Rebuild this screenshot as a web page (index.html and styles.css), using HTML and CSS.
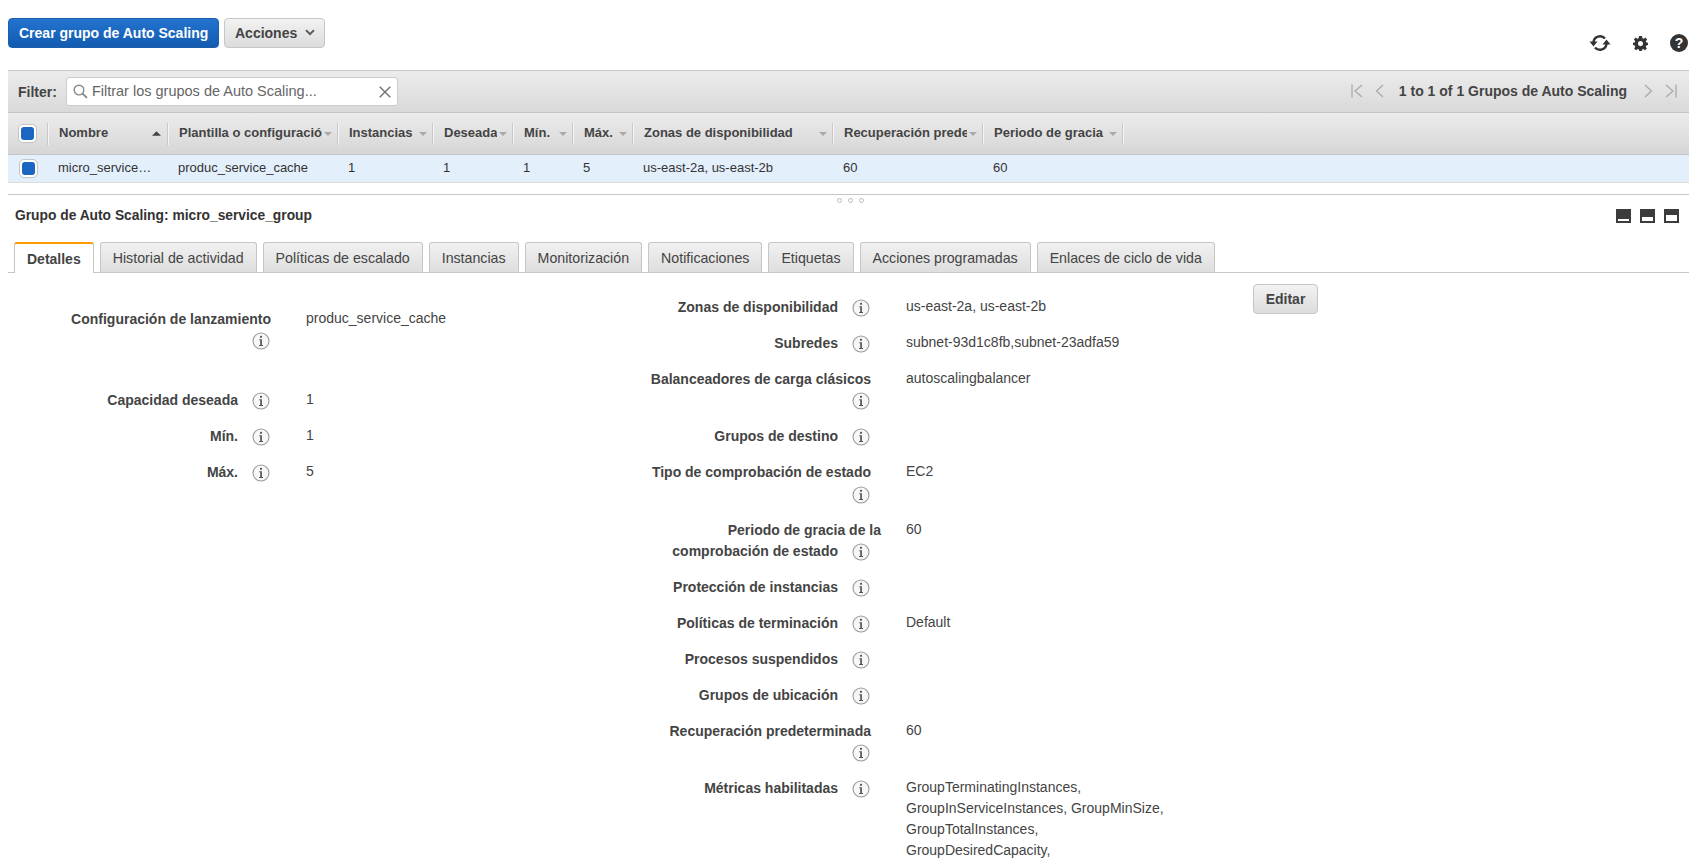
FILE: index.html
```html
<!DOCTYPE html>
<html lang="es">
<head>
<meta charset="utf-8">
<title>Grupos de Auto Scaling</title>
<link rel="stylesheet" href="styles.css">
</head>
<body>
<svg class="defs" width="0" height="0" aria-hidden="true">
  <symbol id="info" viewBox="0 0 18 18">
    <circle cx="9" cy="9" r="8" fill="#f7f7f7" stroke="#9a9a9a" stroke-width="1.1"/>
    <rect x="8" y="3.8" width="2" height="2" rx="0.6" fill="#555"/>
    <path d="M7.3 7.2H9.9V12.9H11V14H7.1V12.9H8.2V8.2H7.3Z" fill="#555"/>
  </symbol>
  <symbol id="caret" viewBox="0 0 8 4"><path d="M0 0H8L4 4Z" fill="#aaa"/></symbol>
</svg>

<header class="toolbar">
  <div class="actions">
    <button class="btn btn-primary">Crear grupo de Auto Scaling</button>
    <button class="btn btn-default btn-menu">Acciones
      <svg class="chev" viewBox="0 0 10 7" width="10" height="7"><path d="M1 1.2L5 5.2L9 1.2" fill="none" stroke="#555" stroke-width="1.8"/></svg>
    </button>
  </div>
  <div class="tools">
    <svg width="22" height="20" viewBox="0 0 22 20"><path d="M4.5 9.5A6.5 6.5 0 0 1 16 5.6" fill="none" stroke="#333" stroke-width="2.4"/><path d="M17.5 10.5A6.5 6.5 0 0 1 6 14.4" fill="none" stroke="#333" stroke-width="2.4"/><path d="M0.5 8.5H8.5L4.5 13.5Z" fill="#333"/><path d="M13.5 11.5H21.5L17.5 6.5Z" fill="#333"/></svg>
    <svg width="15" height="15" viewBox="0 0 16 16"><path fill="#333" fill-rule="evenodd" d="M6.4 0H9.6L10 2.3L11.4 2.9L13.3 1.6L15 3.8L13.7 5.6L14.2 6.9L16 7.3V9.7L14.2 10.1L13.6 11.5L14.8 13.3L12.8 15.1L11 13.8L9.7 14.4L9.3 16H6.7L6.3 14.4L5 13.8L3.2 15.1L1.2 13.3L2.4 11.5L1.8 10.1L0 9.7V7.3L1.8 6.9L2.3 5.6L1 3.8L2.7 1.6L4.6 2.9L6 2.3ZM8 5.4A2.7 2.7 0 1 0 8 10.8A2.7 2.7 0 1 0 8 5.4Z"/></svg>
    <span class="help">?</span>
  </div>
</header>

<section class="grid-panel">
  <div class="filter-bar">
    <label class="filter-label">Filter:</label>
    <div class="search">
      <svg width="15" height="15" viewBox="0 0 14 14"><circle cx="5.6" cy="5.6" r="4.5" fill="none" stroke="#888" stroke-width="1.3"/><path d="M9 9L13 13" stroke="#888" stroke-width="1.8"/></svg>
      <span class="search-text">Filtrar los grupos de Auto Scaling...</span>
      <svg class="clear" width="12" height="12" viewBox="0 0 12 12"><path d="M0.7 0.7L11.3 11.3M11.3 0.7L0.7 11.3" stroke="#777" stroke-width="1.5"/></svg>
    </div>
    <div class="pager">
      <svg width="12" height="14" viewBox="0 0 12 14"><path d="M1 0.5V13.5M11 1L4 7L11 13" fill="none" stroke="#aaa" stroke-width="1.3"/></svg>
      <svg width="9" height="14" viewBox="0 0 9 14"><path d="M8 1L1.5 7L8 13" fill="none" stroke="#aaa" stroke-width="1.3"/></svg>
      <span class="pager-text">1 to 1 of 1 Grupos de Auto Scaling</span>
      <svg width="9" height="14" viewBox="0 0 9 14"><path d="M1 1L7.5 7L1 13" fill="none" stroke="#aaa" stroke-width="1.3"/></svg>
      <svg width="12" height="14" viewBox="0 0 12 14"><path d="M11 0.5V13.5M1 1L8 7L1 13" fill="none" stroke="#aaa" stroke-width="1.3"/></svg>
    </div>
  </div>

  <div class="cols head">
    <div class="hcell check-cell"><span class="check"></span></div>
    <div class="hcell"><span class="hlabel">Nombre</span><svg class="sort" width="9" height="5" viewBox="0 0 8 4"><path d="M0 4H8L4 0Z" fill="#444"/></svg></div>
    <div class="hcell"><span class="hlabel">Plantilla o configuración</span><svg class="caret"><use href="#caret"/></svg></div>
    <div class="hcell"><span class="hlabel">Instancias</span><svg class="caret"><use href="#caret"/></svg></div>
    <div class="hcell"><span class="hlabel">Deseada</span><svg class="caret"><use href="#caret"/></svg></div>
    <div class="hcell"><span class="hlabel">Mín.</span><svg class="caret"><use href="#caret"/></svg></div>
    <div class="hcell"><span class="hlabel">Máx.</span><svg class="caret"><use href="#caret"/></svg></div>
    <div class="hcell"><span class="hlabel">Zonas de disponibilidad</span><svg class="caret"><use href="#caret"/></svg></div>
    <div class="hcell"><span class="hlabel">Recuperación predeterminada</span><svg class="caret"><use href="#caret"/></svg></div>
    <div class="hcell"><span class="hlabel">Periodo de gracia</span><svg class="caret"><use href="#caret"/></svg></div>
  </div>

  <div class="cols row">
    <div class="cell check-cell"><span class="check"></span></div>
    <div class="cell">micro_service…</div>
    <div class="cell">produc_service_cache</div>
    <div class="cell">1</div>
    <div class="cell">1</div>
    <div class="cell">1</div>
    <div class="cell">5</div>
    <div class="cell">us-east-2a, us-east-2b</div>
    <div class="cell">60</div>
    <div class="cell">60</div>
  </div>
</section>

<div class="splitter">
  <div class="dots"><i></i><i></i><i></i></div>
</div>

<div class="title-row">
  <h2 class="title">Grupo de Auto Scaling: micro_service_group</h2>
  <div class="views">
    <span class="view view-s"></span>
    <span class="view view-m"></span>
    <span class="view view-l"></span>
  </div>
</div>

<nav class="tabs">
  <a class="tab active">Detalles</a>
  <a class="tab">Historial de actividad</a>
  <a class="tab">Políticas de escalado</a>
  <a class="tab">Instancias</a>
  <a class="tab">Monitorización</a>
  <a class="tab">Notificaciones</a>
  <a class="tab">Etiquetas</a>
  <a class="tab">Acciones programadas</a>
  <a class="tab">Enlaces de ciclo de vida</a>
</nav>

<main class="details">
  <dl class="props props-left">
    <dt class="tall"><span class="lbl">Configuración de lanzamiento</span><svg class="info"><use href="#info"/></svg></dt><dd>produc_service_cache</dd>
    <dt><span class="lbl">Capacidad deseada</span><svg class="info"><use href="#info"/></svg></dt><dd>1</dd>
    <dt><span class="lbl">Mín.</span><svg class="info"><use href="#info"/></svg></dt><dd>1</dd>
    <dt><span class="lbl">Máx.</span><svg class="info"><use href="#info"/></svg></dt><dd>5</dd>
  </dl>
  <dl class="props props-mid">
    <dt><span class="lbl">Zonas de disponibilidad</span><svg class="info"><use href="#info"/></svg></dt><dd>us-east-2a, us-east-2b</dd>
    <dt><span class="lbl">Subredes</span><svg class="info"><use href="#info"/></svg></dt><dd>subnet-93d1c8fb,subnet-23adfa59</dd>
    <dt><span class="lbl">Balanceadores de carga clásicos</span><svg class="info"><use href="#info"/></svg></dt><dd>autoscalingbalancer</dd>
    <dt><span class="lbl">Grupos de destino</span><svg class="info"><use href="#info"/></svg></dt><dd></dd>
    <dt><span class="lbl">Tipo de comprobación de estado</span><svg class="info"><use href="#info"/></svg></dt><dd>EC2</dd>
    <dt><span class="lbl">Periodo de gracia de la comprobación de estado</span><svg class="info"><use href="#info"/></svg></dt><dd>60</dd>
    <dt><span class="lbl">Protección de instancias</span><svg class="info"><use href="#info"/></svg></dt><dd></dd>
    <dt><span class="lbl">Políticas de terminación</span><svg class="info"><use href="#info"/></svg></dt><dd>Default</dd>
    <dt><span class="lbl">Procesos suspendidos</span><svg class="info"><use href="#info"/></svg></dt><dd></dd>
    <dt><span class="lbl">Grupos de ubicación</span><svg class="info"><use href="#info"/></svg></dt><dd></dd>
    <dt><span class="lbl">Recuperación predeterminada</span><svg class="info"><use href="#info"/></svg></dt><dd>60</dd>
    <dt><span class="lbl">Métricas habilitadas</span><svg class="info"><use href="#info"/></svg></dt><dd>GroupTerminatingInstances, GroupInServiceInstances, GroupMinSize, GroupTotalInstances, GroupDesiredCapacity,</dd>
  </dl>
  <button class="btn btn-default btn-edit">Editar</button>
</main>
</body>
</html>
```

FILE: styles.css
```css
* { box-sizing: border-box; }
html, body { height: 100%; overflow: hidden; }
body {
  margin: 0;
  background: #fff;
  color: #444;
  font: 13px/1.3 "Liberation Sans", Arial, sans-serif;
}
.defs { position: absolute; }

/* toolbar */
.toolbar {
  height: 70px;
  padding: 18px 12px 0 8px;
  display: flex;
  justify-content: space-between;
  align-items: flex-start;
}
.actions { display: flex; gap: 5px; }
.btn {
  font: bold 14px "Liberation Sans", Arial, sans-serif;
  height: 30px;
  border-radius: 4px;
  padding: 0 10px;
  cursor: pointer;
  white-space: nowrap;
}
.btn-primary {
  width: 211px;
  color: #fff;
  background: linear-gradient(#2273cf, #135bb0);
  border: 1px solid #1a5fae;
}
.btn-default {
  color: #444;
  background: linear-gradient(#f2f2f2, #dcdcdc);
  border: 1px solid #c6c6c6;
}
.btn-menu { width: 101px; }
.chev { margin-left: 4px; vertical-align: 2px; }
.tools { display: flex; align-items: center; gap: 22px; margin-top: 15px; }
.help {
  width: 18px;
  height: 18px;
  border-radius: 50%;
  background: #333;
  color: #fff;
  font: bold 14px/18px "Liberation Sans", Arial, sans-serif;
  text-align: center;
}

/* grid */
.grid-panel { margin: 0 11px 0 8px; }
.filter-bar {
  height: 43px;
  padding: 6px 12px 0 10px;
  display: flex;
  align-items: flex-start;
  background: linear-gradient(#ececec, #d9d9d9);
  border-top: 1px solid #c6c6c6;
  border-bottom: 1px solid #c6c6c6;
}
.filter-label { font-weight: bold; font-size: 14px; color: #444; margin: 6px 9px 0 0; }
.search {
  width: 332px;
  height: 29px;
  background: #fff;
  border: 1px solid #ccc;
  border-radius: 3px;
  padding: 0 6px;
  display: flex;
  align-items: center;
  gap: 4px;
  color: #666;
  font-size: 14.5px;
}
.search-text { flex: 1; white-space: nowrap; }
.pager { margin-left: auto; margin-top: 6px; display: flex; align-items: center; gap: 12px; height: 16px; }
.pager-text { font-weight: bold; font-size: 14px; margin: 0 5px 0 3px; color: #444; }

.cols {
  display: grid;
  grid-template-columns: 40px 120px 170px 95px 80px 60px 60px 200px 150px 140px 1fr;
}
.head {
  height: 42px;
  background: linear-gradient(#ececec, #d6d6d6);
  border-bottom: 1px solid #c6c6c6;
  align-items: center;
}
.hcell {
  height: 22px;
  display: flex;
  align-items: center;
  padding: 0 5px 0 11px;
  border-right: 1px solid #c8c8c8;
  box-shadow: 1px 0 0 #f4f4f4;
  overflow: hidden;
}
.hlabel {
  flex: 1;
  min-width: 0;
  overflow: hidden;
  white-space: nowrap;
  font-weight: bold;
  color: #444;
}
.caret { width: 8px; height: 4px; flex: none; margin-left: 2px; }
.sort { flex: none; margin-right: 1px; }
.hcell.check-cell { padding: 0 0 0 10px; justify-content: flex-start; }
.check {
  display: block;
  width: 19px;
  height: 19px;
  border: 1px solid #c4c4c4;
  border-radius: 5px;
  background: #fff;
  padding: 2px;
}
.check::before {
  content: "";
  display: block;
  width: 13px;
  height: 13px;
  border-radius: 3px;
  background: #1b66c2;
}
.row {
  height: 28px;
  background: #e4effc;
  border-bottom: 1px solid #dcdcdc;
  align-items: center;
  color: #333;
}
.cell { padding-left: 10px; white-space: nowrap; overflow: hidden; display: flex; align-items: center; height: 27px; }
.cell.check-cell { padding-left: 11px; }

/* splitter */
.splitter {
  margin: 11px 11px 0 8px;
  border-top: 1px solid #c6c6c6;
  height: 9px;
  display: flex;
  justify-content: center;
  padding-top: 3px;
}
.dots { display: flex; gap: 6px; margin-left: 3px; }
.dots i { width: 5px; height: 5px; border-radius: 50%; background: #fff; border: 1px solid #bbb; }

.title-row {
  margin: 0 21px 0 15px;
  display: flex;
  justify-content: space-between;
  align-items: center;
  height: 26px;
}
.title { margin: 0; font-size: 13.8px; font-weight: bold; color: #333; }
.views { display: flex; gap: 9px; }
.view { width: 15px; height: 14px; background: #3c3c3c; padding: 2px; display: flex; align-items: flex-end; }
.view::before { content: ""; display: block; width: 100%; background: #fff; }
.view-s::before { height: 2px; }
.view-m::before { height: 4px; }
.view-l::before { height: 6px; }

/* tabs */
.tabs {
  margin: 14px 11px 0 8px;
  padding-left: 6px;
  height: 30px;
  display: flex;
  gap: 6px;
  align-items: flex-end;
  border-bottom: 1px solid #c6c6c6;
}
.tab {
  height: 30px;
  padding: 6px 12px 0;
  background: linear-gradient(#f1f1f1, #dedede);
  border: 1px solid #c6c6c6;
  border-bottom: 0;
  border-radius: 3px 3px 0 0;
  color: #444;
  font-size: 14.2px;
  white-space: nowrap;
}
.tab.active {
  background: #fff;
  border-top: 2px solid #ff9900;
  font-weight: bold;
  font-size: 14px;
  height: 31px;
  margin-bottom: -1px;
}

/* details */
.details {
  position: relative;
  display: grid;
  grid-template-columns: 600px 265px;
  padding: 24px 0 0 41px;
}
.props {
  margin: 0;
  display: grid;
  grid-template-columns: 240px 265px;
  align-content: start;
  column-gap: 25px;
}
.props-left { padding-top: 12px; }
dt {
  text-align: right;
  font-weight: bold;
  font-size: 14px;
  line-height: 21.1px;
  padding-bottom: 15px;
  color: #444;
}
dt.tall { padding-bottom: 39px; }
.lbl { padding-right: 10px; }
.info { width: 18px; height: 18px; margin: 0 11px 0 4px; vertical-align: -5px; }
dd { margin: -1px 0 0; font-size: 14px; line-height: 21px; color: #444; }
.btn-edit {
  position: absolute;
  left: 1253px;
  top: 11px;
  width: 65px;
  height: 30px;
}
```
